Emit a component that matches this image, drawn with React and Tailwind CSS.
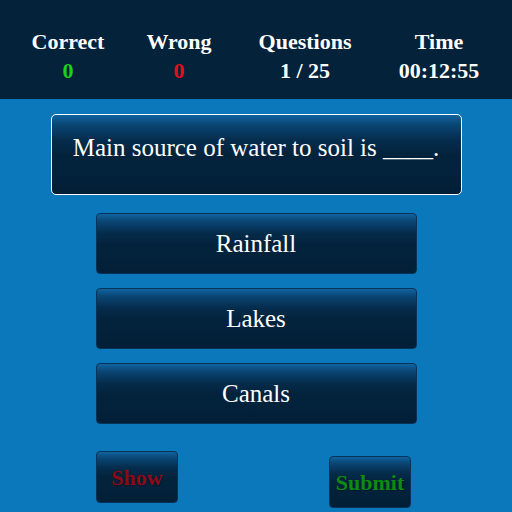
import React from "react";

const serif = "font-['Liberation_Serif',serif]";
const glossy =
  "bg-[linear-gradient(to_bottom,#1064a0_0%,#0a4675_12%,#052c4c_32%,#03233d_50%,#021f37_100%)]";

const stats = [
  { label: "Correct", value: "0", color: "text-[#19d219]" },
  { label: "Wrong", value: "0", color: "text-[#e0101e]" },
  { label: "Questions", value: "1 / 25", color: "text-white" },
  { label: "Time", value: "00:12:55", color: "text-white" },
];

const options = ["Rainfall", "Lakes", "Canals"];

export default function App() {
  return (
    <div className={`min-h-[512px] bg-[#0b78bb] ${serif}`}>
      <div className="h-[99px] bg-[#04223a] pt-[27px] grid grid-cols-[136px_86px_166px_102px]">
        {stats.map((s) => (
          <div key={s.label} className="flex flex-col items-center text-[22px] leading-[29px] font-bold">
            <span className="text-white">{s.label}</span>
            <span className={s.color}>{s.value}</span>
          </div>
        ))}
      </div>

      <div
        className={`mx-auto mt-[15px] w-[411px] h-[81px] rounded-[5px] border border-white pt-[18px] text-center text-[25px] leading-[30px] text-white ${glossy}`}
      >
        Main source of water to soil is ____.
      </div>

      <div className="mt-[18px] flex flex-col items-center gap-[14px]">
        {options.map((o) => (
          <button
            key={o}
            type="button"
            className={`w-[321px] h-[61px] rounded-[4px] border border-[#083358] flex items-center justify-center text-[25px] text-white ${serif} ${glossy}`}
          >
            {o}
          </button>
        ))}
      </div>

      <div className="ml-[96px] mt-[27px] w-[315px] flex justify-between items-start">
        <button
          type="button"
          className={`w-[82px] h-[52px] rounded-[4px] border border-[#083358] flex items-center justify-center text-[22px] font-bold text-[#8e0a16] [text-shadow:1px_1px_1px_#021a2e] ${serif} ${glossy}`}
        >
          Show
        </button>
        <button
          type="button"
          className={`mt-[5px] w-[82px] h-[52px] rounded-[4px] border border-[#083358] flex items-center justify-center text-[22px] font-bold text-[#0c8c12] [text-shadow:1px_1px_1px_#021a2e] ${serif} ${glossy}`}
        >
          Submit
        </button>
      </div>
    </div>
  );
}
